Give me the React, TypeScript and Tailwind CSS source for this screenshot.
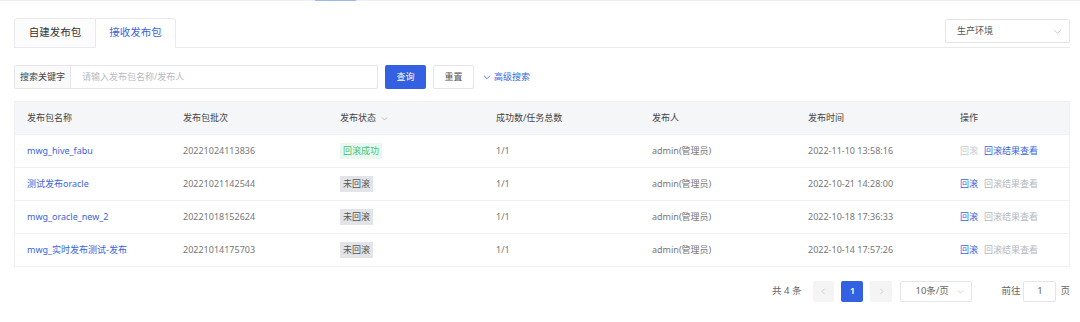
import React from "react";

const rows = [
  { name: "mwg_hive_fabu", batch: "20221024113836", status: "ok", count: "1/1", user: "admin(管理员)", time: "2022-11-10 13:58:16" },
  { name: "测试发布oracle", batch: "20221021142544", status: "none", count: "1/1", user: "admin(管理员)", time: "2022-10-21 14:28:00" },
  { name: "mwg_oracle_new_2", batch: "20221018152624", status: "none", count: "1/1", user: "admin(管理员)", time: "2022-10-18 17:36:33" },
  { name: "mwg_实时发布测试-发布", batch: "20221014175703", status: "none", count: "1/1", user: "admin(管理员)", time: "2022-10-14 17:57:26" },
];

function Chevron({ className }: { className?: string }) {
  return (
    <svg className={className} viewBox="0 0 12 12" fill="none" stroke="currentColor" strokeWidth={1}>
      <path d="M2.5 4.5L6 8l3.5-3.5" />
    </svg>
  );
}

export default function App() {
  return (
    <div
      className="w-[1080px] h-[322px] bg-white text-[#333]"
      style={{ fontFamily: '"Noto Sans", "Noto Sans CJK SC", sans-serif' }}
    >
      {/* top strip */}
      <div className="h-px bg-[#eceef3] flex">
        <div className="w-[315px]" />
        <div className="w-[41px] h-px bg-[#9fb6f4]" />
      </div>

      <div className="pl-[14px] pr-[10px] pt-[17px]">
        {/* tabs + env select */}
        <div className="flex items-start">
          <div className="flex flex-1 border-b border-[#e8eaee] h-[30px] items-end">
            <div className="w-[82px] h-[30px] border border-[#e8eaee] rounded-tl-[3px] bg-[#fcfcfc] flex items-center justify-center text-[10.5px] text-[#333] -mb-px">
              自建发布包
            </div>
            <div className="w-[80px] h-[30px] border border-l-0 border-[#e8eaee] border-b-white -mb-px rounded-tr-[3px] bg-white flex items-center justify-center text-[10.5px] text-[#3a63e0]">
              接收发布包
            </div>
          </div>
          <div className="w-[125px] h-[24px] mt-px border border-[#e3e5ea] rounded-[2px] flex items-center justify-between pl-[11px] pr-[6px] text-[9px] text-[#555] -ml-[125px] bg-white">
            <span>生产环境</span>
            <Chevron className="w-[11px] h-[11px] text-[#c0c4cc]" />
          </div>
        </div>

        {/* search bar */}
        <div className="flex items-center mt-[17px] h-[24px]">
          <div className="flex h-[24px] w-[364px] border border-[#e3e5ea] rounded-[2px]">
            <div className="w-[56px] border-r border-[#e3e5ea] bg-[#fafafa] flex items-center justify-center text-[9px] text-[#444]">
              搜索关键字
            </div>
            <div className="flex-1 flex items-center pl-[11px] text-[9px] text-[#b8bcc4]">
              请输入发布包名称/发布人
            </div>
          </div>
          <div className="ml-[7px] w-[41px] h-[24px] bg-[#3461e1] rounded-[2px] text-white text-[9px] flex items-center justify-center">
            查询
          </div>
          <div className="ml-[7px] w-[41px] h-[24px] border border-[#e3e5ea] rounded-[2px] text-[#555] text-[9px] flex items-center justify-center">
            重置
          </div>
          <div className="ml-[8px] flex items-center text-[#3a63e0] text-[9px] gap-[2px]">
            <Chevron className="w-[10px] h-[10px]" />
            <span>高级搜索</span>
          </div>
        </div>

        {/* table */}
        <div className="mt-[12px] border border-[#eef0f3] text-[9px]">
          <div className="grid grid-cols-[156px_157px_156px_156px_156px_152px_1fr] h-[32px] bg-[#f5f6f8] items-center text-[#444] pl-[12px]">
            <div>发布包名称</div>
            <div>发布包批次</div>
            <div className="flex items-center gap-[4px]">
              发布状态
              <Chevron className="w-[9px] h-[9px] text-[#aaa]" />
            </div>
            <div>成功数/任务总数</div>
            <div>发布人</div>
            <div>发布时间</div>
            <div>操作</div>
          </div>
          {rows.map((r, i) => (
            <div
              key={i}
              className="grid grid-cols-[156px_157px_156px_156px_156px_152px_1fr] h-[33px] items-center text-[#777] pl-[12px] border-t border-[#eef0f3]"
            >
              <div className="text-[#3a63e0]">{r.name}</div>
              <div>{r.batch}</div>
              <div>
                {r.status === "ok" ? (
                  <span className="inline-flex h-[16px] items-center px-[3px] bg-[#e9f8ef] text-[#43c47e]">回滚成功</span>
                ) : (
                  <span className="inline-flex h-[16px] items-center px-[3px] bg-[#e3e4e8] text-[#555]">未回滚</span>
                )}
              </div>
              <div>{r.count}</div>
              <div>{r.user}</div>
              <div>{r.time}</div>
              <div className="flex gap-[6px]">
                {r.status === "ok" ? (
                  <>
                    <span className="text-[#c8cacf]">回滚</span>
                    <span className="text-[#3a63e0]">回滚结果查看</span>
                  </>
                ) : (
                  <>
                    <span className="text-[#3a63e0]">回滚</span>
                    <span className="text-[#b5b8be]">回滚结果查看</span>
                  </>
                )}
              </div>
            </div>
          ))}
        </div>

        {/* pagination */}
        <div className="flex justify-end items-center mt-[14px] h-[21px] text-[9.5px] text-[#666]">
          <span>共 4 条</span>
          <div className="ml-[12px] w-[21px] h-[21px] bg-[#f4f4f5] rounded-[2px] flex items-center justify-center text-[#c0c4cc]">
            <Chevron className="w-[9px] h-[9px] rotate-90" />
          </div>
          <div className="ml-[7px] w-[22px] h-[21px] bg-[#3461e1] rounded-[2px] flex items-center justify-center text-white font-semibold">1</div>
          <div className="ml-[7px] w-[22px] h-[21px] bg-[#f4f4f5] rounded-[2px] flex items-center justify-center text-[#c0c4cc]">
            <Chevron className="w-[9px] h-[9px] -rotate-90" />
          </div>
          <div className="ml-[8px] w-[72px] h-[21px] border border-[#e3e5ea] rounded-[2px] flex items-center justify-between pl-[14px] pr-[6px]">
            <span>10条/页</span>
            <Chevron className="w-[9px] h-[9px] text-[#c0c4cc]" />
          </div>
          <span className="ml-[29px]">前往</span>
          <div className="ml-[3px] w-[33px] h-[21px] border border-[#e3e5ea] rounded-[2px] flex items-center justify-center">1</div>
          <span className="ml-[4px]">页</span>
        </div>
      </div>
    </div>
  );
}
